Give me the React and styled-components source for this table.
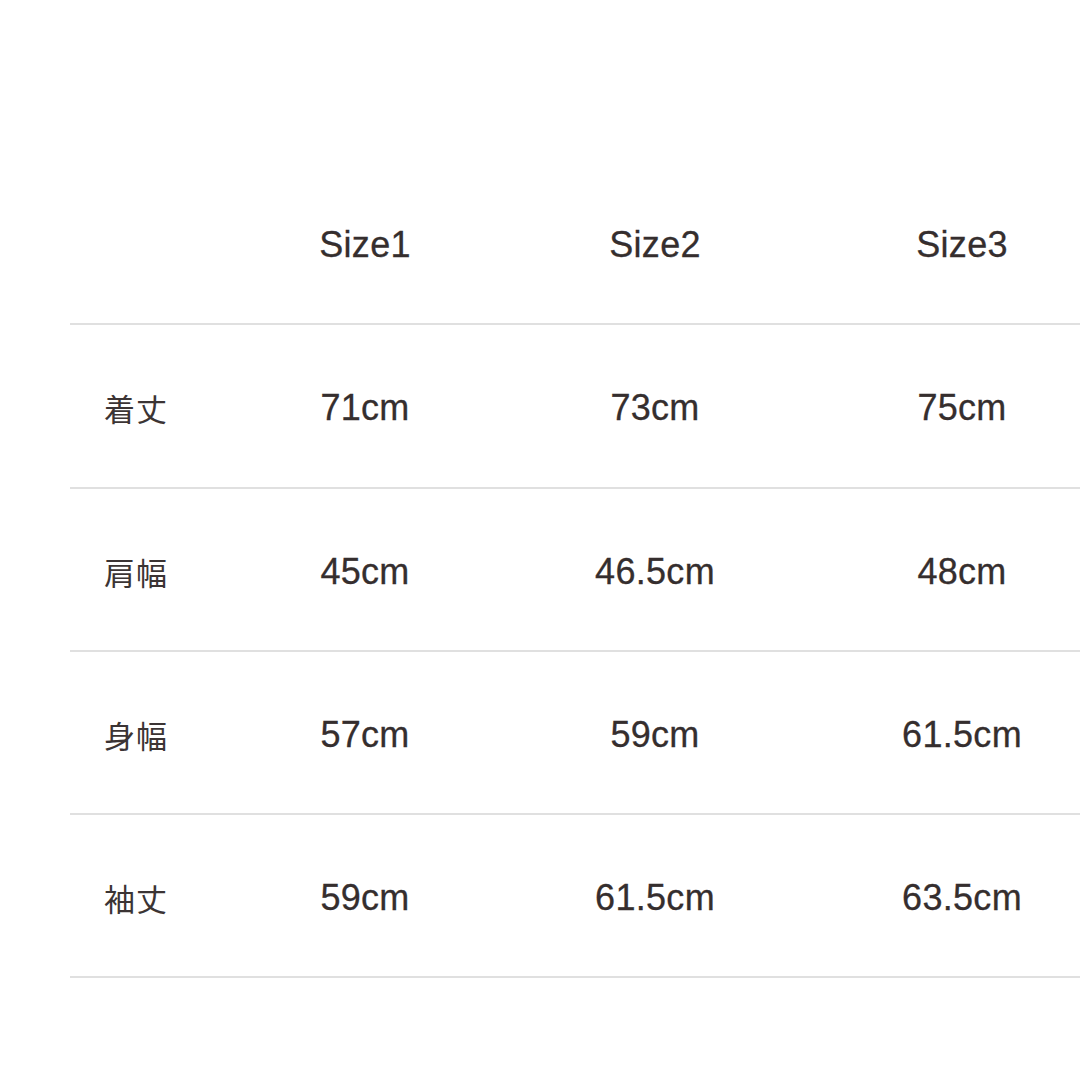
import React from 'react';
import styled, { createGlobalStyle } from 'styled-components';

const GlobalStyle = createGlobalStyle`
  html, body {
    margin: 0;
    padding: 0;
    background: #fff;
    overflow: hidden;
  }
`;

const Page = styled.div`
  width: 1080px;
  height: 1079px;
  padding-top: 162px;
  box-sizing: border-box;
  background: #fff;
`;

const Table = styled.div`
  margin-left: 70px;
  width: 1010px;
  display: flex;
  flex-direction: column;
`;

const Row = styled.div`
  display: grid;
  grid-template-columns: 150px 290px 290px 1fr;
  align-items: center;
  height: 163.3px;
  box-sizing: border-box;
  border-bottom: 2px solid #e0e0e0;
`;

const Label = styled.div`
  padding-left: 34px;
  padding-top: 4px;
  font-family: 'Noto Sans CJK JP', 'Noto Sans', sans-serif;
  font-size: 31px;
  color: #3b3434;
  letter-spacing: 1px;
`;

const Cell = styled.div`
  text-align: center;
  padding-top: 5px;
  padding-left: ${(p) => (p.$last ? '44px' : '0')};
  font-family: 'Liberation Sans', Arial, sans-serif;
  font-size: 36px;
  color: #352e2e;
  letter-spacing: 0.3px;
  -webkit-text-stroke: 0.3px #352e2e;
`;

const headers = ['Size1', 'Size2', 'Size3'];

const rows = [
  { label: '着丈', values: ['71cm', '73cm', '75cm'] },
  { label: '肩幅', values: ['45cm', '46.5cm', '48cm'] },
  { label: '身幅', values: ['57cm', '59cm', '61.5cm'] },
  { label: '袖丈', values: ['59cm', '61.5cm', '63.5cm'] },
];

export default function App() {
  return (
    <>
      <GlobalStyle />
      <Page>
        <Table>
          <Row>
            <Label />
            {headers.map((h, i) => (
              <Cell key={h} $last={i === 2}>
                {h}
              </Cell>
            ))}
          </Row>
          {rows.map((r) => (
            <Row key={r.label}>
              <Label>{r.label}</Label>
              {r.values.map((v, i) => (
                <Cell key={i} $last={i === 2}>
                  {v}
                </Cell>
              ))}
            </Row>
          ))}
        </Table>
      </Page>
    </>
  );
}
